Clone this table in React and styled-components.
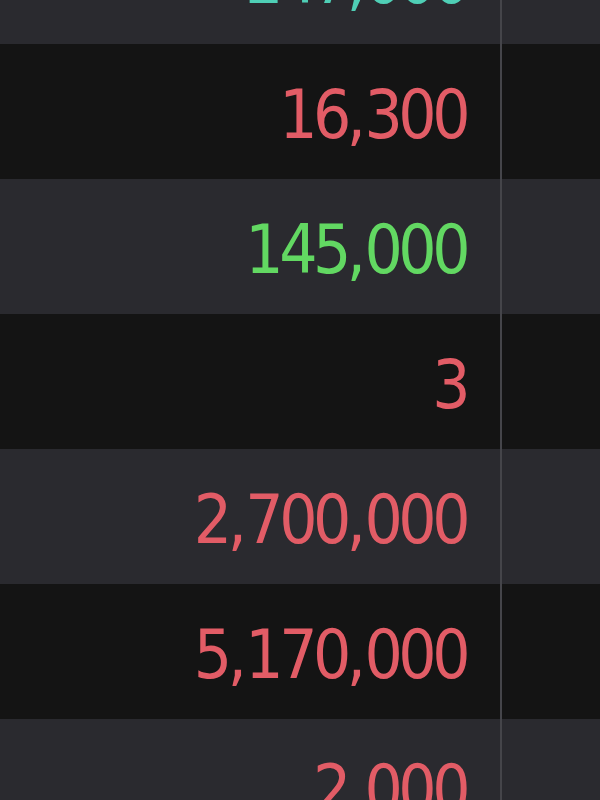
import styled, { createGlobalStyle } from "styled-components";

const GlobalStyle = createGlobalStyle`
  html, body {
    margin: 0;
    padding: 0;
    background: #151515;
    overflow: hidden;
  }
`;

const Table = styled.div`
  display: flex;
  flex-direction: column;
  width: 600px;
  margin-top: -91px;
  font-family: "DejaVu Sans Condensed", "DejaVu Sans", sans-serif;
  font-stretch: condensed;
`;

const Row = styled.div`
  display: grid;
  grid-template-columns: 502px 1fr;
  height: 135px;
  background: ${(p) => (p.$alt ? "#2a2a2f" : "#141414")};
`;

const Cell = styled.div`
  display: flex;
  justify-content: flex-end;
  align-items: flex-start;
  padding: 38px 34px 0 0;
  border-right: 2px solid #45454a;
  font-size: 67px;
  line-height: 1;
  letter-spacing: -4.5px;
  color: ${(p) => p.$color};
  white-space: nowrap;
`;

const Comma = styled.span`
  letter-spacing: -1.5px;
`;

const Blank = styled.div``;

const colors = {
  up: "#62d862",
  down: "#e25c66",
  flat: "#4fcfb6",
};

const rows = [
  { value: "247,000", tone: "flat" },
  { value: "16,300", tone: "down" },
  { value: "145,000", tone: "up" },
  { value: "3", tone: "down" },
  { value: "2,700,000", tone: "down" },
  { value: "5,170,000", tone: "down" },
  { value: "2,000", tone: "down" },
];

function Amount({ value }) {
  const parts = value.split(",");
  return (
    <span>
      {parts.map((part, i) => (
        <span key={i}>
          {part}
          {i < parts.length - 1 && <Comma>,</Comma>}
        </span>
      ))}
    </span>
  );
}

export default function App() {
  return (
    <>
      <GlobalStyle />
      <Table>
        {rows.map((row, i) => (
          <Row key={i} $alt={i % 2 === 0}>
            <Cell $color={colors[row.tone]}>
              <Amount value={row.value} />
            </Cell>
            <Blank />
          </Row>
        ))}
      </Table>
    </>
  );
}
